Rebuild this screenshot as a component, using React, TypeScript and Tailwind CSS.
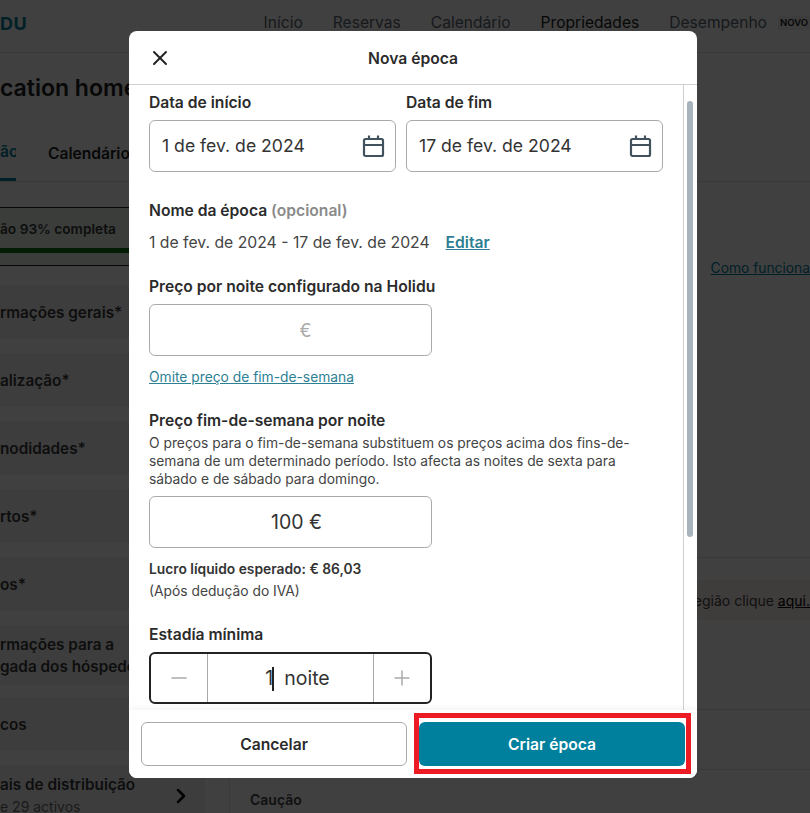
import React from "react";
import { X, Minus, Plus, ChevronRight } from "lucide-react";

const font = { fontFamily: "Inter, 'Liberation Sans', sans-serif" };

function NavItem({ label, strong }: { label: string; strong?: boolean }) {
  return <span className={strong ? "text-[#222222]" : "text-[#5b6670]"}>{label}</span>;
}

function SideItem({ lines, sub, chevron, h, mb }: { lines: string[]; sub?: string; chevron?: boolean; h: string; mb: string }) {
  return (
    <div className={`${h} ${mb} flex items-center justify-between pt-[2px] pr-[12px] bg-[#f4f4f4] overflow-hidden`}>
      <div className="whitespace-nowrap">
        {lines.map((l) => (
          <div key={l} className="text-[15.3px] leading-[22px] font-semibold text-[#3a3a3a]">{l}</div>
        ))}
        {sub && <div className="text-[14px] leading-[22px] text-[#6a6a6a]">{sub}</div>}
      </div>
      {chevron && <ChevronRight className="w-6 h-6 text-black" strokeWidth={2.5} />}
    </div>
  );
}

function CalendarIcon() {
  return (
    <svg width="24" height="24" viewBox="0 0 24 24" fill="none" stroke="#42525c" strokeWidth="2.2">
      <rect x="2" y="5" width="19" height="17" rx="1.5" />
      <path d="M2 11h19M7 1.5V5M16 1.5V5" />
    </svg>
  );
}

function DateField({ value, w }: { value: string; w: string }) {
  return (
    <div className={`${w} h-[52px] rounded-md border border-[#aaaaaa] flex items-center justify-between pl-[12px] pr-[9px]`}>
      <span className="text-[17.6px] text-[#333333]">{value}</span>
      <CalendarIcon />
    </div>
  );
}

function Label({ children }: { children: React.ReactNode }) {
  return <div className="text-[15.65px] leading-[20px] font-semibold text-[#2b2b2b]">{children}</div>;
}

export default function App() {
  return (
    <div className="relative h-[813px] w-[810px] overflow-hidden bg-white" style={font}>
      {/* Page behind the dialog */}
      <header className="h-[53px] pb-[6px] border-b border-[#e4e4e4] flex items-center justify-between">
        <span className="text-[18px] font-bold text-[#00809d] tracking-wide">DU</span>
        <nav className="flex items-center gap-[30px] text-[15.6px] whitespace-nowrap">
          <NavItem label="Início" />
          <NavItem label="Reservas" />
          <NavItem label="Calendário" />
          <NavItem label="Propriedades" strong />
          <span className="flex items-center gap-[11px]">
            <NavItem label="Desempenho" />
            <span className="text-[9.5px] font-semibold text-[#222222] bg-[#f1f1f1] px-[2px]">NOVO</span>
          </span>
        </nav>
      </header>
      <div className="h-[68px] pt-[3px] flex items-center whitespace-nowrap">
        <span className="text-[23px] font-semibold text-[#222222]">cation home</span>
      </div>
      <div className="h-[61px] border-b border-[#e4e4e4] flex items-stretch text-[15.6px] font-semibold">
        <span className="border-b-[3px] border-[#00809d] w-[16px] pt-[5px] flex items-center text-[#00809d] overflow-hidden">ão</span>
        <span className="ml-[32px] pt-[5px] flex items-center text-[#222222]">Calendário</span>
      </div>
      <div className="flex mt-[25px]">
        <aside className="w-[205px] shrink-0">
          <div className="h-[59px] border-y border-[#222222] bg-[#e9f1e9] pt-[11px] mb-[19px]">
            <div className="text-[13.7px] leading-[20px] font-semibold text-[#3a3a3a]">ão 93% completa</div>
            <div className="h-[5px] mt-[9px] bg-[#0a6b0a]" />
          </div>
          <SideItem h="h-[54px]" mb="mb-[14px]" lines={["rmações gerais*"]} />
          <SideItem h="h-[54px]" mb="mb-[14px]" lines={["alização*"]} />
          <SideItem h="h-[54px]" mb="mb-[14px]" lines={["nodidades*"]} />
          <SideItem h="h-[54px]" mb="mb-[14px]" lines={["rtos*"]} />
          <SideItem h="h-[54px]" mb="mb-[14px]" lines={["os*"]} />
          <SideItem h="h-[60px]" mb="mb-[12px]" lines={["rmações para a", "gada dos hóspedes"]} />
          <SideItem h="h-[54px]" mb="mb-[14px]" lines={["cos"]} />
          <SideItem h="h-[60px]" mb="mb-0" lines={["ais de distribuição"]} sub="e 29 activos" chevron />
        </aside>
        <main className="ml-[24px] flex-1 border-l border-[#e4e4e4] min-w-0">
          <div className="h-[351px] border-b border-[#e4e4e4] flex justify-end pl-[482px] pt-[51px] overflow-hidden">
            <span className="text-[13.8px] underline text-[#00809d] whitespace-nowrap">Como funciona</span>
          </div>
          <div className="h-[22px]" />
          <div className="h-[40px] bg-[#fbeeee] flex items-center justify-end text-[14px] text-[#444444] whitespace-nowrap">
            <span>egião clique <span className="underline text-black">aqui.</span></span>
          </div>
          <div className="h-[90px] border-b border-[#e4e4e4]" />
          <div className="h-[60px] border-b border-[#e4e4e4]" />
          <div className="pl-[20px] pt-[19px] text-[14px] font-semibold text-[#444444]">Caução</div>
        </main>
      </div>

      {/* Overlay */}
      <div className="absolute inset-0 bg-black/75" />

      {/* Dialog */}
      <div className="absolute left-[129px] top-[31px] w-[568px] h-[747px] bg-white rounded-lg flex flex-col overflow-hidden isolate">
        <div className="h-[54px] shrink-0 border-b border-[#cfcfcf] relative flex items-center justify-center">
          <X className="absolute left-[19px] top-[15px] w-[24px] h-[24px] text-[#222222]" strokeWidth={2} />
          <span className="text-[15.65px] font-semibold text-[#2b2b2b] pt-[2px]">Nova época</span>
        </div>
        <div className="flex-1 min-h-0 flex">
          <div className="flex-1 pl-[20px] pt-[8px] overflow-hidden">
            <div className="flex gap-[10px]">
              <div>
                <Label>Data de início</Label>
                <div className="mt-[7px]"><DateField value="1 de fev. de 2024" w="w-[247px]" /></div>
              </div>
              <div>
                <Label>Data de fim</Label>
                <div className="mt-[7px]"><DateField value="17 de fev. de 2024" w="w-[257px]" /></div>
              </div>
            </div>
            <div className="mt-[29px]">
              <Label>Nome da época <span className="text-[#8a8a8a]">(opcional)</span></Label>
            </div>
            <div className="mt-[12px] flex items-center text-[15.75px] leading-[20px] text-[#444444]">
              <span>1 de fev. de 2024 - 17 de fev. de 2024</span>
              <span className="ml-[16px] text-[15.65px] font-semibold underline text-[#2d7f94]">Editar</span>
            </div>
            <div className="mt-[24px]"><Label>Preço por noite configurado na Holidu</Label></div>
            <div className="mt-[7px] w-[283px] h-[52px] rounded-md border border-[#aaaaaa] flex items-center justify-center pl-[30px] text-[18px] text-[#aaaaaa]">€</div>
            <div className="mt-[11px] text-[13.8px] leading-[20px] underline text-[#2d7f94]">Omite preço de fim-de-semana</div>
            <div className="mt-[24px]"><Label>Preço fim-de-semana por noite</Label></div>
            <div className="mt-[3px] w-[490px] text-[13.8px] leading-[18px] text-[#444444]">
              O preços para o fim-de-semana substituem os preços acima dos fins-de-semana de um determinado período. Isto afecta as noites de sexta para sábado e de sábado para domingo.
            </div>
            <div className="mt-[8px] w-[283px] h-[52px] rounded-md border border-[#aaaaaa] flex items-center justify-center pl-[12px] pt-[2px] text-[19.5px] text-[#333333]">100 €</div>
            <div className="mt-[11px] text-[13.8px] leading-[20px] font-semibold text-[#333333]">Lucro líquido esperado: € 86,03</div>
            <div className="mt-[2px] text-[13.8px] leading-[20px] text-[#444444]">(Após dedução do IVA)</div>
            <div className="mt-[24px]"><Label>Estadía mínima</Label></div>
            <div className="mt-[7px] w-[283px] h-[52px] rounded-md border-2 border-[#222222] flex items-stretch">
              <div className="w-[57px] flex items-center justify-center border-r border-[#aaaaaa]">
                <Minus className="w-[24px] h-[24px] text-[#aaaaaa]" strokeWidth={1.5} />
              </div>
              <div className="flex-1 flex items-center justify-center pl-[14px] pt-[1px] text-[19.5px] text-[#333333]">
                <span>1</span>
                <span className="w-[2px] h-[24px] bg-[#222222] -ml-[1px]" />
                <span className="ml-[10px]">noite</span>
              </div>
              <div className="w-[57px] flex items-center justify-center border-l border-[#aaaaaa]">
                <Plus className="w-[24px] h-[24px] text-[#aaaaaa]" strokeWidth={1.5} />
              </div>
            </div>
          </div>
          <div className="w-[14px] shrink-0 border-l border-[#cfcfcf] pt-[16px] pl-[3px]">
            <div className="w-[6px] h-[436px] rounded-full bg-[#a8b4bd]" />
          </div>
        </div>
        <div className="h-[68px] shrink-0 flex gap-[12px] px-[12px] pt-[12px] bg-white shadow-[0_-2px_6px_rgba(0,0,0,0.05)] z-10">
          <div className="w-[266px] h-[44px] rounded-md border border-[#aaaaaa] flex items-center justify-center pt-[1px] text-[15.65px] font-semibold text-[#2b2b2b]">Cancelar</div>
          <div className="w-[266px] h-[44px] rounded-md bg-[#00809d] flex items-center justify-center pt-[1px] text-[15.65px] font-semibold text-white">Criar época</div>
        </div>
      </div>

      {/* Red annotation rectangle */}
      <div className="absolute left-[414px] top-[713px] w-[277px] h-[61px] border-[5px] border-[#ed1c24]" />
    </div>
  );
}
